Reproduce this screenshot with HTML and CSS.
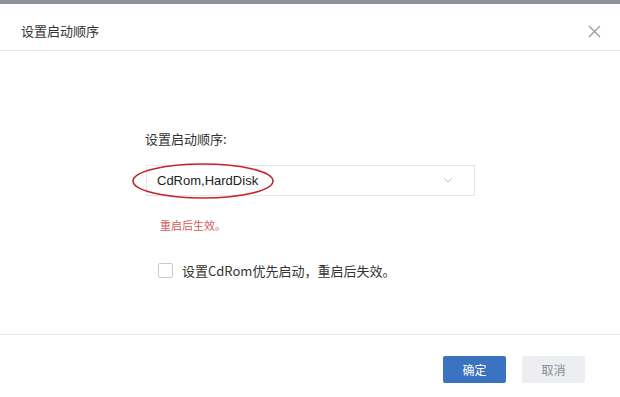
FILE: index.html
```html
<!DOCTYPE html>
<html lang="zh">
<head>
<meta charset="utf-8">
<link rel="stylesheet" href="styles.css">
</head>
<body>
<div class="topstrip"></div>
<div class="dialog">
  <div class="header">
    <span class="title">设置启动顺序</span>
    <svg class="close" width="13" height="13" viewBox="0 0 13 13"><path d="M1 1L12 12M12 1L1 12" stroke="#9a9a9a" stroke-width="1.3" fill="none"/></svg>
  </div>
  <div class="content">
    <div class="label">设置启动顺序:</div>
    <div class="select">
      <span class="value">CdRom,HardDisk</span>
      <svg class="chev" width="8" height="5" viewBox="0 0 8 5"><path d="M0.5 0.5L4 4L7.5 0.5" stroke="#b5bcc6" stroke-width="1" fill="none"/></svg>
      <svg class="ellipse" width="144" height="38" viewBox="0 0 144 38"><ellipse cx="72" cy="19" rx="70" ry="17" stroke="#c4262e" stroke-width="1.6" fill="none"/></svg>
    </div>
    <div class="hint">重启后生效。</div>
    <label class="check">
      <span class="box"></span>
      <span class="check-text">设置CdRom优先启动，重启后失效。</span>
    </label>
  </div>
  <div class="footer">
    <button class="btn primary">确定</button>
    <button class="btn secondary">取消</button>
  </div>
</div>
</body>
</html>
```

FILE: styles.css
```css
html, body {
  margin: 0;
  padding: 0;
  background: #ffffff;
}
body {
  width: 620px;
  height: 397px;
  overflow: hidden;
  font-family: "Noto Sans CJK SC", "Liberation Sans", sans-serif;
  color: #333333;
}
.topstrip {
  height: 4px;
  background: #8d929b;
}
.header {
  height: 47px;
  border-bottom: 1px solid #e6e6e6;
  display: flex;
  align-items: center;
  justify-content: space-between;
  padding: 0 19px 0 21px;
  box-sizing: border-box;
}
.title {
  font-size: 13px;
  color: #333333;
  line-height: 18px;
  margin-top: 8px;
}
.close {
  margin-top: 8px;
}
.content {
  height: 283px;
  box-sizing: border-box;
  padding: 79px 0 0 145px;
}
.label {
  font-size: 13px;
  line-height: 18px;
  color: #333333;
}
.select {
  position: relative;
  margin-top: 17px;
  margin-left: 1px;
  width: 329px;
  height: 31px;
  box-sizing: border-box;
  border: 1px solid #e4e6ea;
  display: flex;
  align-items: center;
  justify-content: space-between;
  padding: 0 22px 0 10px;
}
.value {
  font-family: "Liberation Sans", sans-serif;
  font-size: 13px;
  color: #222222;
}
.ellipse {
  position: absolute;
  left: -16px;
  top: -4px;
}
.hint {
  margin-top: 20px;
  padding-left: 15px;
  font-size: 11px;
  line-height: 18px;
  color: #d45a5a;
}
.check {
  margin-top: 27px;
  padding-left: 13px;
  display: flex;
  align-items: center;
  height: 18px;
}
.box {
  width: 13px;
  height: 13px;
  border: 1px solid #c8ccd2;
  border-radius: 2px;
  background: #fff;
}
.check-text {
  margin-left: 9px;
  font-size: 13px;
  color: #333333;
}
.footer {
  border-top: 1px solid #e6e6e6;
  display: flex;
  justify-content: flex-end;
  gap: 16px;
  padding: 21px 35px 0 0;
}
.btn {
  width: 63px;
  height: 27px;
  border: none;
  border-radius: 2px;
  font-family: "Noto Sans CJK SC", sans-serif;
  font-size: 12px;
  padding: 0;
}
.primary {
  background: #3a73c0;
  color: #ffffff;
}
.secondary {
  background: #eceef1;
  color: #888c92;
}
```
